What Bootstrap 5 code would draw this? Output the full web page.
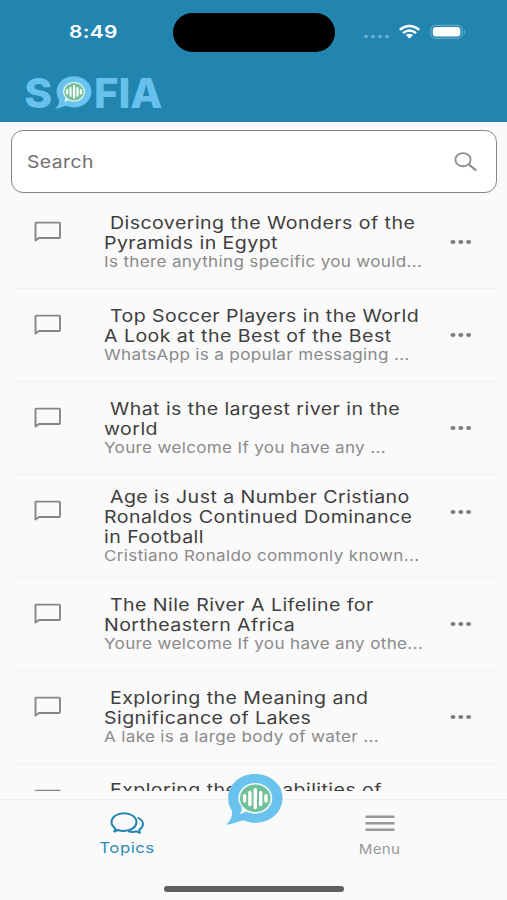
<!DOCTYPE html>
<html lang="en">
<head>
<meta charset="utf-8">
<meta name="viewport" content="width=device-width, initial-scale=1">
<title>Sofia – Topics</title>
<link href="https://cdn.jsdelivr.net/npm/bootstrap@5.3.0/dist/css/bootstrap.min.css" rel="stylesheet">
<style>
html,body{height:100%}
body{font-family:Inter,"Liberation Sans",sans-serif;background:#fafafa;color:#3c3c3c}
.app{height:900px;width:507px}
.top{height:122px;background:#2185af}
.status{height:64px;padding:0 41px 0 69px}
.clock{width:104px;font-size:17.5px;font-weight:600;line-height:20px;letter-spacing:.3px}
.clock .wide{transform:scaleX(1.19)}
.island{width:162px;height:39px;border-radius:20px;background:#000}
.brand{margin-left:24px;margin-top:10px}
.wide{display:block;transform:scaleX(1.15);transform-origin:0 50%;white-space:nowrap}
.search{margin:8px 10px 0 11px;height:63px;border:1.5px solid #858585;border-radius:12px;background:#fff;padding:0 18px 0 15px;color:#707070;font-size:16.8px;letter-spacing:.4px}
.search .wide{padding-top:2px}
.topics{margin:3px 10px 0 12px}
.topic{min-height:92.9px;border-bottom:1px solid #f0f0f0;flex:none}
.topic-icon{width:92px;padding:22.700px 0 0 21.500px}
.title-line{font-size:17px;line-height:20px;letter-spacing:.39px;color:#3e3e3e}
.preview{font-size:14.8px;line-height:18px;letter-spacing:.31px;color:#8a8a8a}
.more{width:47.500px}
.tall{min-height:103.3px}
.tall .more{padding-bottom:28px}
.foot{height:109px;padding-top:8px}
.bar{border-top:1px solid #efefef;height:101px}
.tab{width:253px;font-size:14.6px;line-height:20px;letter-spacing:.45px}
.tab-active{color:#2b8db6}
.tab-idle{color:#989898;font-size:13.2px;letter-spacing:.2px}
.tab-active .wide{margin-left:1px}
.tab .wide{transform-origin:50% 50%}
.fab{left:225px;top:-18px}
.home{left:164px;bottom:8px;width:180px;height:6px;border-radius:3px;background:#5f5f5f}
</style>
<script src="https://cdn.jsdelivr.net/npm/bootstrap@5.3.0/dist/js/bootstrap.bundle.min.js"></script>
</head>
<body>
<svg width="0" height="0" class="position-absolute" aria-hidden="true">
  <symbol id="bubble" viewBox="0 0 59 53">
    <path fill="#69c3ee" d="M30 1C45.500 1 57.500 11.500 57.500 25.200S45.500 49.800 30 49.800C25.500 49.800 21.800 48.700 18.500 47.200C12.500 48.900 7 51 .8 52C5.500 48.200 7.800 43 6.900 37.500C4.300 34 3.200 30 3.200 25.200C3.200 11.500 14.500 1 30 1Z"/>
    <path fill="#eefbf5" d="M30.200 10C39.800 10 47.300 16.800 47.300 25.300S39.800 40.700 30.200 40.700C27 40.700 24 39.900 21.500 38.600L14.800 41.500C16.700 38.600 17.300 36 16 32.500C14 30.500 13.300 28 13.300 25.300C13.300 16.800 20.600 10 30.200 10Z"/>
    <ellipse cx="30.300" cy="25.300" rx="15.300" ry="13.800" fill="#72c19a"/>
    <path stroke="#fff" stroke-width="3.400" stroke-linecap="round" d="M19.600 22.800V28M24.900 19.500V31.500M30.300 16.500V34.500M35.700 19.500V31.500M41 22.800V28"/>
  </symbol>
  <symbol id="chat" viewBox="0 0 28 22">
    <path fill="none" stroke="#868686" stroke-width="1.900" stroke-linejoin="round" d="M2.200 1.600H25Q26 1.600 26 2.600V16Q26 17 25 17H5L1.500 19.600V2.400Q1.500 1.600 2.200 1.600Z"/>
  </symbol>
  <symbol id="dots" viewBox="0 0 22 6">
    <g fill="#7c7c7c"><ellipse cx="3" cy="3" rx="2.500" ry="2.100"/><ellipse cx="10.800" cy="3" rx="2.500" ry="2.100"/><ellipse cx="18.600" cy="3" rx="2.500" ry="2.100"/></g>
  </symbol>
</svg>
<main class="app d-flex flex-column overflow-hidden position-relative">
  <header class="top flex-shrink-0">
    <div class="status d-flex align-items-center text-white">
      <div class="clock"><span class="wide">8:49</span></div>
      <div class="island"></div>
      <svg class="ms-auto" width="104" height="20" viewBox="0 0 104 20">
        <g fill="#69aecb"><ellipse cx="4" cy="14.500" rx="2" ry="1.700"/><ellipse cx="11" cy="14.500" rx="2" ry="1.700"/><ellipse cx="18" cy="14.500" rx="2" ry="1.700"/><ellipse cx="25" cy="14.500" rx="2" ry="1.700"/></g>
        <g fill="none" stroke="#fff" stroke-width="2.500"><path d="M37.800 7.700Q47.500 .2 57.200 7.700"/><path d="M41 11.100Q47.500 5.800 54 11.100"/></g>
        <path fill="#fff" d="M43.800 12.900Q47.500 10.400 51.200 12.900L47.500 16.400Z"/>
        <rect x="68.800" y="3.300" width="31.500" height="13" rx="4.500" fill="none" stroke="#76b5cf"/>
        <rect x="70.800" y="5" width="27.500" height="9.600" rx="3" fill="#fff"/>
        <path fill="#76b5cf" d="M102 7.700Q104 9.800 102 11.900Z"/>
      </svg>
    </div>
    <svg class="brand d-block overflow-visible" width="140" height="40" viewBox="24 74 140 40" font-family="Inter, sans-serif" font-weight="800" font-size="41.500" fill="#67c1ec">
      <text x="24.300" y="108.300" textLength="28" lengthAdjust="spacingAndGlyphs">S</text>
      <use href="#bubble" x="54.500" y="75.500" width="38" height="34"/>
      <text x="94" y="108.300" textLength="68.500" lengthAdjust="spacingAndGlyphs">FIA</text>
    </svg>
  </header>
  <div class="search d-flex align-items-center justify-content-between flex-shrink-0">
    <span class="wide">Search</span>
    <svg width="24" height="20" viewBox="0 0 24 20" fill="none" stroke="#919191" stroke-width="1.900"><ellipse cx="9" cy="7.700" rx="7.600" ry="6.600"/><path stroke-width="2.200" d="M14.500 12.200L22.300 18.600"/></svg>
  </div>
  <section class="topics d-flex flex-column flex-grow-1 overflow-hidden">
    <article class="topic d-flex"><div class="topic-icon"><svg width="28" height="22"><use href="#chat"/></svg></div><div class="flex-grow-1 align-self-center"><span class="wide title-line">&nbsp;Discovering the Wonders of the</span><span class="wide title-line">Pyramids in Egypt</span><span class="wide preview">Is there anything specific you would...</span></div><div class="more d-flex align-items-center"><svg width="22" height="6"><use href="#dots"/></svg></div></article>
    <article class="topic d-flex"><div class="topic-icon"><svg width="28" height="22"><use href="#chat"/></svg></div><div class="flex-grow-1 align-self-center"><span class="wide title-line">&nbsp;Top Soccer Players in the World</span><span class="wide title-line">A Look at the Best of the Best</span><span class="wide preview">WhatsApp is a popular messaging ...</span></div><div class="more d-flex align-items-center"><svg width="22" height="6"><use href="#dots"/></svg></div></article>
    <article class="topic d-flex"><div class="topic-icon"><svg width="28" height="22"><use href="#chat"/></svg></div><div class="flex-grow-1 align-self-center"><span class="wide title-line">&nbsp;What is the largest river in the</span><span class="wide title-line">world</span><span class="wide preview">Youre welcome If you have any ...</span></div><div class="more d-flex align-items-center"><svg width="22" height="6"><use href="#dots"/></svg></div></article>
    <article class="topic tall d-flex"><div class="topic-icon"><svg width="28" height="22"><use href="#chat"/></svg></div><div class="flex-grow-1 align-self-center"><span class="wide title-line">&nbsp;Age is Just a Number Cristiano</span><span class="wide title-line">Ronaldos Continued Dominance</span><span class="wide title-line">in Football</span><span class="wide preview">Cristiano Ronaldo commonly known...</span></div><div class="more d-flex align-items-center"><svg width="22" height="6"><use href="#dots"/></svg></div></article>
    <article class="topic d-flex"><div class="topic-icon"><svg width="28" height="22"><use href="#chat"/></svg></div><div class="flex-grow-1 align-self-center"><span class="wide title-line">&nbsp;The Nile River A Lifeline for</span><span class="wide title-line">Northeastern Africa</span><span class="wide preview">Youre welcome If you have any othe...</span></div><div class="more d-flex align-items-center"><svg width="22" height="6"><use href="#dots"/></svg></div></article>
    <article class="topic d-flex"><div class="topic-icon"><svg width="28" height="22"><use href="#chat"/></svg></div><div class="flex-grow-1 align-self-center"><span class="wide title-line">&nbsp;Exploring the Meaning and</span><span class="wide title-line">Significance of Lakes</span><span class="wide preview">A lake is a large body of water ...</span></div><div class="more d-flex align-items-center"><svg width="22" height="6"><use href="#dots"/></svg></div></article>
    <article class="topic d-flex"><div class="topic-icon"><svg width="28" height="22"><use href="#chat"/></svg></div><div class="pt-3"><span class="wide title-line">&nbsp;Exploring the Capabilities of</span></div></article>
  </section>
  <footer class="foot flex-shrink-0 position-relative">
    <nav class="bar d-flex">
      <div class="tab tab-active text-center">
        <svg class="d-block mx-auto" width="36" height="38" viewBox="0 0 36 38" fill="none" stroke="#2185af" stroke-width="2" stroke-linejoin="round" stroke-linecap="round"><path d="M15 13.200C22 13.200 27.500 17 27.500 22S22 31 15 31C12.900 31 10.900 30.700 9.200 30L5.300 31.500L6.500 28.500C4 26.900 2.500 24.500 2.500 22C2.500 17 8 13.200 15 13.200Z"/><path d="M29.500 18C32.200 19.500 34 21.500 34 24C34 26.300 32.500 28.300 30.300 29.700L30.800 32.900L27.500 31.300C25.200 32.200 22.500 32 20 31.600"/></svg>
        <span class="wide">Topics</span>
      </div>
      <div class="tab tab-idle text-center">
        <svg class="d-block mx-auto" width="30" height="39" fill="#989898"><path d="M.5 15.500h29V18H.5zM.5 22h29v2.500H.5zM.5 28.500h29V31H.5z"/></svg>
        <span class="wide">Menu</span>
      </div>
    </nav>
    <svg class="fab position-absolute" width="59" height="53"><use href="#bubble"/></svg>
    <div class="home position-absolute"></div>
  </footer>
</main>
</body>
</html>
